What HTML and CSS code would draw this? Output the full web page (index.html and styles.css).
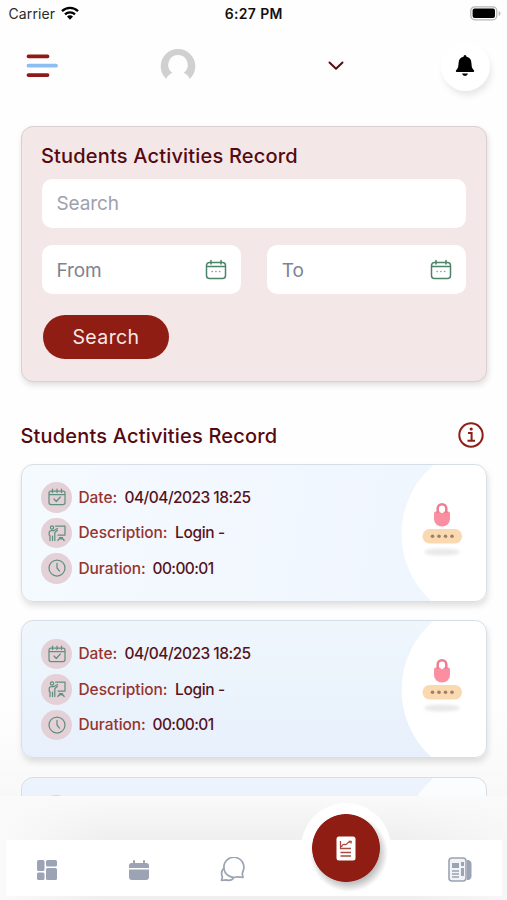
FILE: index.html
```html
<!DOCTYPE html>
<html lang="en">
<head>
<meta charset="utf-8">
<title>Students Activities Record</title>
<link rel="stylesheet" href="styles.css">
</head>
<body>
<svg class="defs" aria-hidden="true">
  <symbol id="calendar" viewBox="0 0 22 22">
    <path d="M4.500 3.500h13a3 3 0 0 1 3 3v10a3 3 0 0 1-3 3h-13a3 3 0 0 1-3-3v-10a3 3 0 0 1 3-3ZM1.500 7.500h19M6 1.500V5M16 1.500V5"/>
    <path class="dots" d="M7 12.500h.5M10.700 12.500h.5M14.400 12.500h.5"/>
  </symbol>
  <symbol id="date" viewBox="0 0 18 18">
    <path d="M3 3h12a2 2 0 0 1 2 2v9.500a2 2 0 0 1-2 2H3a2 2 0 0 1-2-2V5a2 2 0 0 1 2-2ZM1 6.500h16M4.500 1v3.500M9 1v3.500M13.500 1v3.500M6 11l2.300 2.500 4-4.500"/>
  </symbol>
  <symbol id="teach" viewBox="0 0 18 18">
    <circle cx="4" cy="3.500" r="1.600"/>
    <path d="M7.500 2H17v9H10M4.500 16.500V12M2 16.500V12L1.200 11V8.500q0-2 2.300-2H6L9.500 4.500M9.500 6.300 6.800 8.500v8M11.500 13.500h3M9.800 16.500q.5-2 3.200-2t3.200 2"/>
  </symbol>
  <symbol id="clock" viewBox="0 0 18 18">
    <circle cx="9" cy="9" r="8"/><path d="M9 4.300V9l2.500 3.200"/>
  </symbol>
  <symbol id="lock" viewBox="0 0 44 56">
    <ellipse class="shade" cx="22" cy="50" rx="18" ry="3.500"/>
    <path class="lockbody" d="M16 9.500h12q2 0 2 2V17a8 7.500 0 0 1-16 0v-5.500q0-2 2-2Z"/>
    <path class="shackle" d="M17.700 11V6.500a4.300 4.300 0 0 1 8.600 0V11"/>
    <path class="hole" d="M20.300 9.500V7a1.700 1.700 0 0 1 3.400 0v2.500a1.700 1.700 0 0 1-3.400 0Z"/>
    <rect class="pill" x="2.500" y="27" width="39.500" height="14.500" rx="7.200"/>
    <g class="pin"><circle cx="12.500" cy="34.300" r="1.800"/><circle cx="19" cy="34.300" r="1.800"/><circle cx="25.500" cy="34.300" r="1.800"/><circle cx="32" cy="34.300" r="1.800"/></g>
  </symbol>
</svg>

<div class="status">
  <div class="carrier"><span>Carrier</span>
    <svg width="18" height="14" viewBox="0 0 18 14"><g fill="none" stroke="#000" stroke-width="2.300"><path d="M1 5.200a11.500 11.500 0 0 1 16 0"/><path d="M4 8.300a7.200 7.200 0 0 1 10 0"/></g><path d="M6 10.500a4.200 4.200 0 0 1 6 0L9 13.700Z"/></svg>
  </div>
  <div class="time">6:27 PM</div>
  <svg class="battery" width="31" height="15" viewBox="0 0 31 15"><rect x=".8" y=".8" width="26" height="13" rx="4" fill="#fff" stroke="#b5b5b5" stroke-width="1.300"/><rect x="2.600" y="2.600" width="22.400" height="9.400" rx="2"/><path d="M28.700 5q1.800.8 1.800 2.500t-1.800 2.500Z" fill="#b5b5b5"/></svg>
</div>

<header class="topbar">
  <svg width="34" height="26" viewBox="0 0 34 26" fill="none" stroke-width="3.800" stroke-linecap="round"><path d="M3.500 3.300h19M3.500 22.100h19" stroke="#8e1b13"/><path d="M3.500 12.700h27.500" stroke="#8fbdf3"/></svg>
  <svg class="avatar" width="36" height="36" viewBox="0 0 36 36"><path fill="#d0d0d0" d="M6.300 31A17.300 17.300 0 1 1 29.700 31Q28.500 27 23.600 24.800A9.800 9.800 0 1 0 12.400 24.800Q7.500 27 6.300 31Z"/></svg>
  <svg class="chevron" width="16" height="10" viewBox="0 0 16 10" fill="none" stroke="#5c0a14" stroke-width="2" stroke-linecap="round" stroke-linejoin="round"><path d="m1.500 1.500 6.500 6.300 6.500-6.300"/></svg>
  <div class="bell"><svg width="20" height="22" viewBox="0 0 20 22"><path d="M10 0q1.500 0 1.500 1.800 4.700 1 4.900 6.200.1 4.500 1.400 6l1.300 1.500q.5 1.500-1.100 1.500H2q-1.600 0-1.100-1.500L2.200 14q1.300-1.500 1.400-6 .2-5.200 4.900-6.200Q8.500 0 10 0ZM7 18.600h6q-.5 2.400-3 2.400t-3-2.400Z"/></svg></div>
</header>

<main>
  <section class="filter">
    <h2>Students Activities Record</h2>
    <div class="field">Search</div>
    <div class="range">
      <div class="field date"><span>From</span><svg class="cal"><use href="#calendar"/></svg></div>
      <div class="field date"><span>To</span><svg class="cal"><use href="#calendar"/></svg></div>
    </div>
    <button>Search</button>
  </section>

  <div class="heading">
    <h2>Students Activities Record</h2>
    <svg width="26" height="26" viewBox="0 0 26 26" fill="none" stroke="#8f1e16" stroke-width="2"><circle cx="13" cy="13" r="11.700"/><path d="M10 11h3.600v7.500M9.500 18.700h7.500"/><circle cx="13.200" cy="7" r="1.600" fill="#8f1e16" stroke="none"/></svg>
  </div>

  <article class="record">
    <div class="rows">
      <div class="row"><i><svg><use href="#date"/></svg></i><span class="label l1">Date:</span><span class="v1">04/04/2023 18:25</span></div>
      <div class="row"><i><svg><use href="#teach"/></svg></i><span class="label l2">Description:</span><span class="v2">Login -</span></div>
      <div class="row"><i><svg><use href="#clock"/></svg></i><span class="label l3">Duration:</span><span class="v3">00:00:01</span></div>
    </div>
    <div class="art"><svg width="44" height="56"><use href="#lock"/></svg></div>
  </article>
  <article class="record second">
    <div class="rows">
      <div class="row"><i><svg><use href="#date"/></svg></i><span class="label l1">Date:</span><span class="v1">04/04/2023 18:25</span></div>
      <div class="row"><i><svg><use href="#teach"/></svg></i><span class="label l2">Description:</span><span class="v2">Login -</span></div>
      <div class="row"><i><svg><use href="#clock"/></svg></i><span class="label l3">Duration:</span><span class="v3">00:00:01</span></div>
    </div>
    <div class="art"><svg width="44" height="56"><use href="#lock"/></svg></div>
  </article>
  <article class="record third"><div class="rows"><div class="row"><i></i></div></div></article>
</main>

<footer>
  <nav>
    <svg width="20" height="20" viewBox="0 0 20 20"><rect width="7.500" height="11" rx="1.500"/><rect x="9" width="11" height="6.500" rx="1.500"/><rect y="12.500" width="7.500" height="7.500" rx="1.500"/><rect x="9" y="8" width="11" height="12" rx="1.500"/></svg>
    <svg width="20" height="20" viewBox="0 0 20 20"><path d="M0 8V5.500Q0 3 2.500 3H4V1q0-1 1-1t1 1v2h8V1q0-1 1-1t1 1v2h1.500Q20 3 20 5.500V8ZM0 9.500h20V17q0 3-3 3H3q-3 0-3-3Z"/></svg>
    <svg width="25" height="25" viewBox="0 0 25 25" fill="none" stroke="#9ca3b4" stroke-width="1.700" stroke-linejoin="round"><path d="M22.700 15A10 10 0 1 0 17 19.800l6 .6-.8-3.800q.7-.8.500-1.600Z"/><path d="M3.400 11.500q-3 4-1 8.500l-.9 3.500 4.500-.6q4.300 1.700 7.800-1.700"/></svg>
    <a class="active"><svg width="20" height="25" viewBox="0 0 20 25"><rect x=".5" y=".5" width="19" height="24" rx="2.500" fill="#fff"/><path d="M4.500 5v7.500H15M5.500 11q1-3 3-2.500 2 .5 3-1.500L15 5.500M12.500 5.300h2.600v2.200M4.500 16.500H15M4.500 20H15" fill="none" stroke="#a74b40" stroke-width="1.300"/></svg></a>
    <svg width="24" height="25" viewBox="0 0 24 25"><path d="M19 3h1.500Q23.500 4 23.500 7v12q0 3-3 4H19Z"/><rect x="1" y="1" width="17" height="23" rx="3" fill="#f1f3f7" stroke="#9ca3b4" stroke-width="1.600"/><path d="M4 6h7v5H4ZM13 5h3v4h-3ZM13 11h3v8h-3Z"/><path d="M4 14h7M4 17h7M4 20h7" stroke="#9ca3b4" stroke-width="1.500"/></svg>
  </nav>
</footer>
</body>
</html>
```
FILE: styles.css
```css
* { box-sizing: border-box; }
body {
  margin: 0;
  width: 507px;
  height: 900px;
  display: flex;
  flex-direction: column;
  overflow: hidden;
  background: #fefefe;
  font-family: Inter, "Liberation Sans", sans-serif;
}
.defs { position: absolute; width: 0; height: 0; }
svg { flex: none; display: block; }

.status {
  height: 28px;
  flex: none;
  display: grid;
  grid-template-columns: 1fr auto 1fr;
  align-items: center;
  padding: 0 6px 1px 8.500px;
}
.carrier { display: flex; align-items: center; gap: 6px; font-size: 14px; color: #2a2a2a; letter-spacing: .1px; }
.carrier svg { margin-top: -2px; }
.time { font-size: 14px; font-weight: 600; color: #111; letter-spacing: .35px; margin-left: -2px; }
.battery { justify-self: end; margin-top: -1px; }

.topbar {
  height: 76px;
  flex: none;
  display: flex;
  align-items: center;
  padding: 0 17px 0 25px;
}
.avatar { margin-left: 101px; }
.chevron { margin-left: 132px; }
.bell {
  width: 49px;
  height: 49px;
  margin-left: auto;
  border-radius: 50%;
  background: #fff;
  box-shadow: 2px 5px 7px -1px rgba(0, 0, 0, .1);
  display: flex;
  align-items: center;
  justify-content: center;
}
.bell svg { margin-left: -2px; }

main {
  height: 692px;
  flex: none;
  overflow: hidden;
  padding: 21.500px 20px 0 20.500px;
  background: linear-gradient(rgba(0, 0, 0, 0) 600px, rgba(0, 0, 0, .025));
}
h2 { margin: 0; font-size: 20px; line-height: 24px; font-weight: 500; color: #560911; white-space: nowrap; letter-spacing: .18px; }

.filter {
  height: 256px;
  padding: 17px 20px 0;
  border: 1px solid #dccfd1;
  border-radius: 12px;
  background: #f3e7e7;
  box-shadow: 1px 3px 6px rgba(0, 0, 0, .13);
}
.filter h2 { margin-left: -.5px; }
.field {
  height: 49px;
  margin-top: 11.500px;
  padding: 0 15px;
  display: flex;
  align-items: center;
  border-radius: 10px;
  background: #fff;
  color: #9da1ad;
  font-size: 19px;
  letter-spacing: -.1px;
}
.range { display: grid; grid-template-columns: 1fr 1fr; gap: 26px; margin-top: 17px; }
.range .field { margin: 0; color: #7f8290; justify-content: space-between; padding-right: 14px; }
.range span { margin-top: 2px; }
.cal { width: 22px; height: 22px; fill: none; stroke: #4b8468; stroke-width: 1.5; stroke-linecap: round; }
.dots { stroke: #87ab99; stroke-width: 1.3; }
button {
  display: block;
  width: 126px;
  height: 44px;
  margin: 20.500px 0 0 1.500px;
  padding: 0;
  border: 0;
  border-radius: 22px;
  background: #901d13;
  color: #f9e8e6;
  font: 400 19.5px Inter, sans-serif;
  letter-spacing: .4px;
}

.heading { height: 82px; padding: 24px 3px 0 0; display: flex; align-items: center; justify-content: space-between; }
.heading h2 { margin-top: 2px; }

.record {
  height: 138px;
  margin-bottom: 18.500px;
  display: flex;
  justify-content: space-between;
  border: 1px solid #d7dfe6;
  border-radius: 12px;
  background: radial-gradient(circle at 470px 69px, #fff 90px, transparent 90.8px), linear-gradient(100deg, #f4fafe, #eff5fd);
  box-shadow: 1px 4px 6px rgba(0, 0, 0, .12);
}
.record.second { background: radial-gradient(circle at 470px 69px, #fff 90px, transparent 90.8px), linear-gradient(#eff6fc, #e7f0fc); }
.record.third { margin: 0; background: radial-gradient(circle at 470px 69px, #fafcfe 90px, transparent 90.8px), #edf3fc; box-shadow: none; }
.rows { padding: 17.500px 0 0 19.500px; display: flex; flex-direction: column; gap: 5px; }
.row { display: flex; align-items: center; font-size: 15.5px; font-weight: 500; color: #56131d; white-space: nowrap; }
.row i {
  width: 31px;
  height: 30.500px;
  margin-right: 6.500px;
  border-radius: 50%;
  background: #e4d1d7;
  display: flex;
  align-items: center;
  justify-content: center;
}
.row svg { width: 18px; height: 18px; fill: none; stroke: #609080; stroke-width: 1.25; stroke-linecap: round; stroke-linejoin: round; }
.label { color: #96342e; letter-spacing: -.07px; }
.l1 { width: 46px; }
.l2 { width: 96.500px; }
.l3 { width: 74px; }
.v1 { letter-spacing: -.54px; }
.v2 { letter-spacing: -.35px; }
.v3 { letter-spacing: -.6px; }
.art { padding: 37px 22px 0 0; }
.shade { fill: #e9e9e9; filter: blur(1.500px); }
.shackle { fill: none; stroke: #ee7d93; stroke-width: 2.5; }
.lockbody { fill: #fb8ea0; }
.hole { fill: #fff; }
.pill { fill: #fbd9b0; }
.pin { fill: #9d806c; }

footer {
  height: 104px;
  flex: none;
  padding: 44px 5px 4px 6px;
  background: radial-gradient(ellipse 300px 90px at 50% 50%, #ededed, rgba(242, 242, 242, .8) 65%, transparent), linear-gradient(#fbfbfb, #f5f5f5);
  background: linear-gradient(#fafafa, rgba(250, 250, 250, 0) 44px), linear-gradient(90deg, #fafafa, #efefef 20%, #efefef 80%, #f7f7f7);
}
nav {
  height: 56px;
  padding: 0 30px 0 31px;
  display: flex;
  align-items: center;
  background: #fff;
  fill: #9ca3b4;
}
nav > svg { margin-top: 3px; }
nav > svg:nth-child(2) { margin-left: 72px; }
nav > svg:nth-child(3) { margin-left: 71px; }
nav > svg:last-child { margin-left: auto; }
.active {
  width: 90px;
  height: 90px;
  flex: none;
  margin: -40px 0 0 56px;
  border-radius: 50%;
  background: radial-gradient(circle, #901d13 33.500px, transparent 34.300px), radial-gradient(circle at 48px 50px, #aaa 26px, transparent 39px), #fff;
  display: flex;
  align-items: center;
  justify-content: center;
}
```
